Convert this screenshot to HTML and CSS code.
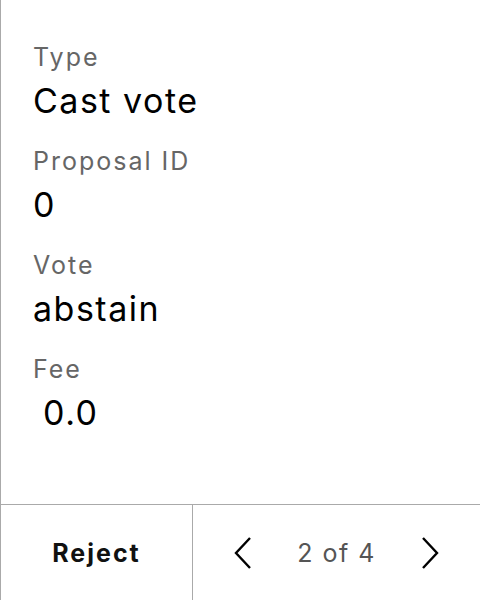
FILE: index.html
```html
<!DOCTYPE html>
<html>
<head>
<meta charset="utf-8">
<link rel="stylesheet" href="styles.css">
</head>
<body>
<div class="screen">
  <div class="content">
    <div class="field">
      <div class="label">Type</div>
      <div class="value">Cast vote</div>
    </div>
    <div class="field">
      <div class="label">Proposal ID</div>
      <div class="value">0</div>
    </div>
    <div class="field">
      <div class="label">Vote</div>
      <div class="value">abstain</div>
    </div>
    <div class="field">
      <div class="label">Fee</div>
      <div class="value fee"> 0.0</div>
    </div>
  </div>
  <div class="footer">
    <div class="reject">Reject</div>
    <div class="pager">
      <svg class="chev" width="18" height="32" viewBox="0 0 18 32"><polyline points="16,1 2,16 16,31" fill="none" stroke="#000" stroke-width="2.4"/></svg>
      <span class="count">2 of 4</span>
      <svg class="chev" width="18" height="32" viewBox="0 0 18 32"><polyline points="2,1 16,16 2,31" fill="none" stroke="#000" stroke-width="2.4"/></svg>
    </div>
  </div>
</div>
</body>
</html>
```
FILE: styles.css
```css
html, body {
  margin: 0;
  padding: 0;
  background: #fff;
}
.screen {
  width: 480px;
  height: 600px;
  box-sizing: border-box;
  border-left: 1px solid #aaa;
  display: flex;
  flex-direction: column;
  font-family: Inter, "Noto Sans", sans-serif;
}
.content {
  flex: 1;
  padding: 39px 0 0 32px;
}
.field {
  margin-bottom: 20px;
}
.label {
  font-size: 25px;
  line-height: 36px;
  letter-spacing: 2px;
  color: #666;
}
.value {
  margin-top: 4px;
  font-size: 34px;
  line-height: 44px;
  letter-spacing: 1.5px;
  color: #000;
}
.fee {
  white-space: pre;
  word-spacing: -1px;
}
.footer {
  height: 96px;
  border-top: 1px solid #aaa;
  display: flex;
  box-sizing: border-box;
}
.reject {
  width: 191px;
  border-right: 1px solid #aaa;
  display: flex;
  align-items: center;
  justify-content: center;
  font-size: 25px;
  font-weight: 700;
  letter-spacing: 2px;
  color: #111;
}
.pager {
  flex: 1;
  display: flex;
  align-items: center;
  justify-content: space-between;
  padding: 0 41px 0 41px;
}
.count {
  font-size: 25px;
  color: #555;
  letter-spacing: 1.5px;
}
```
